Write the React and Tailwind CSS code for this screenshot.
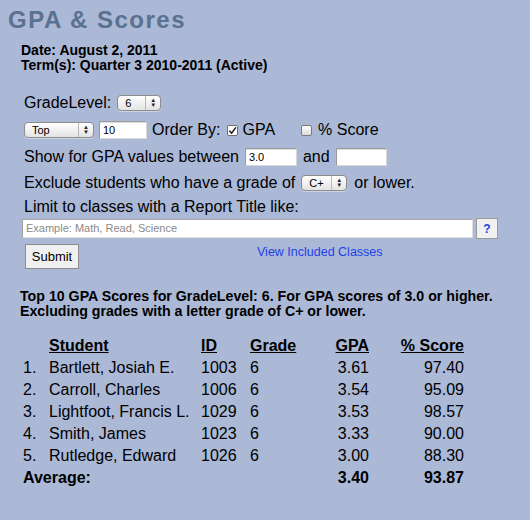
import React from 'react';

const ROWS = [
  { name: 'Bartlett, Josiah E.', id: '1003', grade: '6', gpa: '3.61', score: '97.40' },
  { name: 'Carroll, Charles', id: '1006', grade: '6', gpa: '3.54', score: '95.09' },
  { name: 'Lightfoot, Francis L.', id: '1029', grade: '6', gpa: '3.53', score: '98.57' },
  { name: 'Smith, James', id: '1023', grade: '6', gpa: '3.33', score: '90.00' },
  { name: 'Rutledge, Edward', id: '1026', grade: '6', gpa: '3.00', score: '88.30' },
];

// Mac-style popup select
const FakeSelect = ({ value, width }) => (
  <div
    className={`flex items-center h-[16px] rounded-[4px] border border-[#8d8d8d] bg-gradient-to-b from-white to-[#e4e4e4] shadow-[0_1px_0_rgba(255,255,255,0.4)] ${width}`}
  >
    <span className="flex-1 pl-[7px] text-[11px] leading-none text-black">{value}</span>
    <span className="flex flex-col items-center justify-center w-[15px] h-full border-l border-[#b8b8b8] text-[6px] leading-[5px] text-[#222]">
      <span>▲</span>
      <span>▼</span>
    </span>
  </div>
);

const TextBox = ({ value, width }) => (
  <div
    className={`h-[18px] bg-white border border-[#9a9a9a] border-b-[#d8d8d8] border-r-[#d8d8d8] shadow-[inset_0_1px_1px_rgba(0,0,0,0.15)] text-[11px] leading-[16px] pl-[3px] text-black ${width}`}
  >
    {value}
  </div>
);

export default function App() {
  return (
    <div className="min-h-[520px] w-[530px] bg-[#abb8d6] text-black font-['Liberation_Sans',Arial,sans-serif]">
      <div className="pl-[8px] pt-[5px]">
        <h1 className="text-[24px] leading-[30px] font-bold tracking-[1.5px] text-[#5b7190]">GPA &amp; Scores</h1>
      </div>

      <div className="pl-[21px] pt-[8px] text-[14px] leading-[15px] font-bold">
        <div>Date: August 2, 2011</div>
        <div>Term(s): Quarter 3 2010-2011 (Active)</div>
      </div>

      <div className="pl-[24px] pt-[21px] text-[16px] leading-[18px]">
        <div className="flex items-center gap-[6px] h-[18px]">
          <span>GradeLevel:</span>
          <FakeSelect value="6" width="w-[44px]" />
        </div>

        <div className="flex items-center h-[18px] mt-[9px]">
          <FakeSelect value="Top" width="w-[70px]" />
          <div className="ml-[5px]"><TextBox value="10" width="w-[48px]" /></div>
          <span className="ml-[5px]">Order By:</span>
          <span className="ml-[7px] w-[11px] h-[11px] border border-[#6f6f6f] rounded-[2px] bg-white flex items-center justify-center">
            <svg viewBox="0 0 10 10" className="w-[9px] h-[9px]">
              <path d="M1.5 5.2 L4 8 L8.8 1.5" fill="none" stroke="#111" strokeWidth="1.6" />
            </svg>
          </span>
          <span className="ml-[4px]">GPA</span>
          <span className="ml-[26px] w-[11px] h-[11px] border border-[#7a7a7a] rounded-[2px] bg-gradient-to-b from-white to-[#dcdcdc]" />
          <span className="ml-[6px]">% Score</span>
        </div>

        <div className="flex items-center h-[18px] mt-[9px]">
          <span>Show for GPA values between</span>
          <div className="ml-[6px]"><TextBox value="3.0" width="w-[52px]" /></div>
          <span className="ml-[6px]">and</span>
          <div className="ml-[6px]"><TextBox value="" width="w-[51px]" /></div>
        </div>

        <div className="flex items-center h-[18px] mt-[8px]">
          <span>Exclude students who have a grade of</span>
          <div className="ml-[6px]"><FakeSelect value="C+" width="w-[46px]" /></div>
          <span className="ml-[7px]">or lower.</span>
        </div>

        <div className="h-[18px] mt-[6px]">Limit to classes with a Report Title like:</div>
      </div>

      <div className="flex items-center pl-[22px] mt-[2px]">
        <div className="w-[451px] h-[19px] bg-white border border-[#a4a4a4] border-b-[#dedede] border-r-[#dedede] text-[11px] leading-[17px] pl-[3px] text-[#8a8a8a]">
          Example: Math, Read, Science
        </div>
        <button className="ml-[3px] w-[22px] h-[21px] bg-[#f1f1f1] border border-[#9a9a9a] text-[12px] font-bold text-[#1a3fe0] leading-none">
          ?
        </button>
      </div>

      <div className="flex items-start pl-[25px] mt-[5px]">
        <button className="w-[54px] h-[25px] bg-[#f0f0f0] border border-[#8c8c8c] text-[13px] leading-none">Submit</button>
        <a className="ml-[178px] mt-[1px] text-[12.5px] leading-[14px] text-[#1f3fe8]">View Included Classes</a>
      </div>

      <div className="pl-[20px] pt-[20px] text-[14.2px] leading-[15px] font-bold">
        <div>Top 10 GPA Scores for GradeLevel: 6. For GPA scores of 3.0 or higher.</div>
        <div>Excluding grades with a letter grade of C+ or lower.</div>
      </div>

      <div className="pl-[23px] pt-[16px] text-[16px] leading-[22px]">
        <div className="flex font-bold underline">
          <span className="w-[26px]" />
          <span className="w-[152px]">Student</span>
          <span className="w-[49px]">ID</span>
          <span className="w-[60px]">Grade</span>
          <span className="w-[59px] text-right">GPA</span>
          <span className="w-[95px] text-right">% Score</span>
        </div>
        {ROWS.map((r, i) => (
          <div key={r.id} className="flex">
            <span className="w-[26px]">{i + 1}.</span>
            <span className="w-[152px]">{r.name}</span>
            <span className="w-[49px]">{r.id}</span>
            <span className="w-[60px]">{r.grade}</span>
            <span className="w-[59px] text-right">{r.gpa}</span>
            <span className="w-[95px] text-right">{r.score}</span>
          </div>
        ))}
        <div className="flex font-bold">
          <span className="w-[287px]">Average:</span>
          <span className="w-[59px] text-right">3.40</span>
          <span className="w-[95px] text-right">93.87</span>
        </div>
      </div>
    </div>
  );
}
